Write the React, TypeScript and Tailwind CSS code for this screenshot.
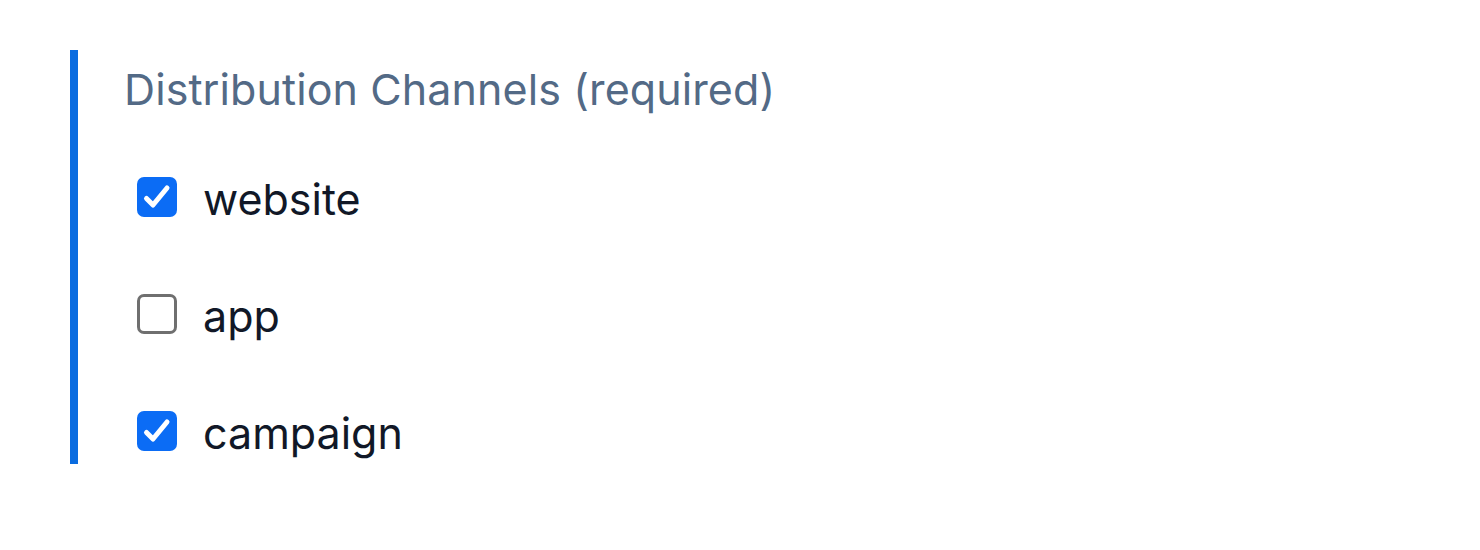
const channels = [
  { name: 'website', checked: true },
  { name: 'app', checked: false },
  { name: 'campaign', checked: true },
]

function Box({ checked }: { checked: boolean }) {
  if (!checked) {
    return <span className="w-[40px] h-[40px] rounded-[7px] border-[3px] border-[#6f6f6f] bg-white shrink-0" />
  }
  return (
    <span className="w-[40px] h-[40px] rounded-[7px] bg-[#0b6cf5] shrink-0 flex items-center justify-center">
      <svg viewBox="0 0 40 40" className="w-[40px] h-[40px]" fill="none" stroke="white" strokeWidth="5" strokeLinecap="round" strokeLinejoin="round">
        <path d="M9.5 21.5l6.5 6.5L30 11" />
      </svg>
    </span>
  )
}

export default function App() {
  return (
    <div className="w-[1480px] h-[550px] bg-white pt-[50px] pl-[70px]" style={{ fontFamily: 'Inter, "Liberation Sans", sans-serif' }}>
      <div className="border-l-[8px] border-[#0a6ce0] h-[414px] pl-[46px] pt-[17px]">
        <div className="text-[43px] leading-[44px] tracking-[0.1px] text-[#536a86]">Distribution Channels (required)</div>
        <div className="mt-[66px] pl-[13px] flex flex-col gap-[77px]">
          {channels.map((c) => (
            <label key={c.name} className="flex items-center gap-[26px] h-[40px]">
              <Box checked={c.checked} />
              <span className="text-[43px] leading-[40px] pt-[4px] text-[#111827]">{c.name}</span>
            </label>
          ))}
        </div>
      </div>
    </div>
  )
}
